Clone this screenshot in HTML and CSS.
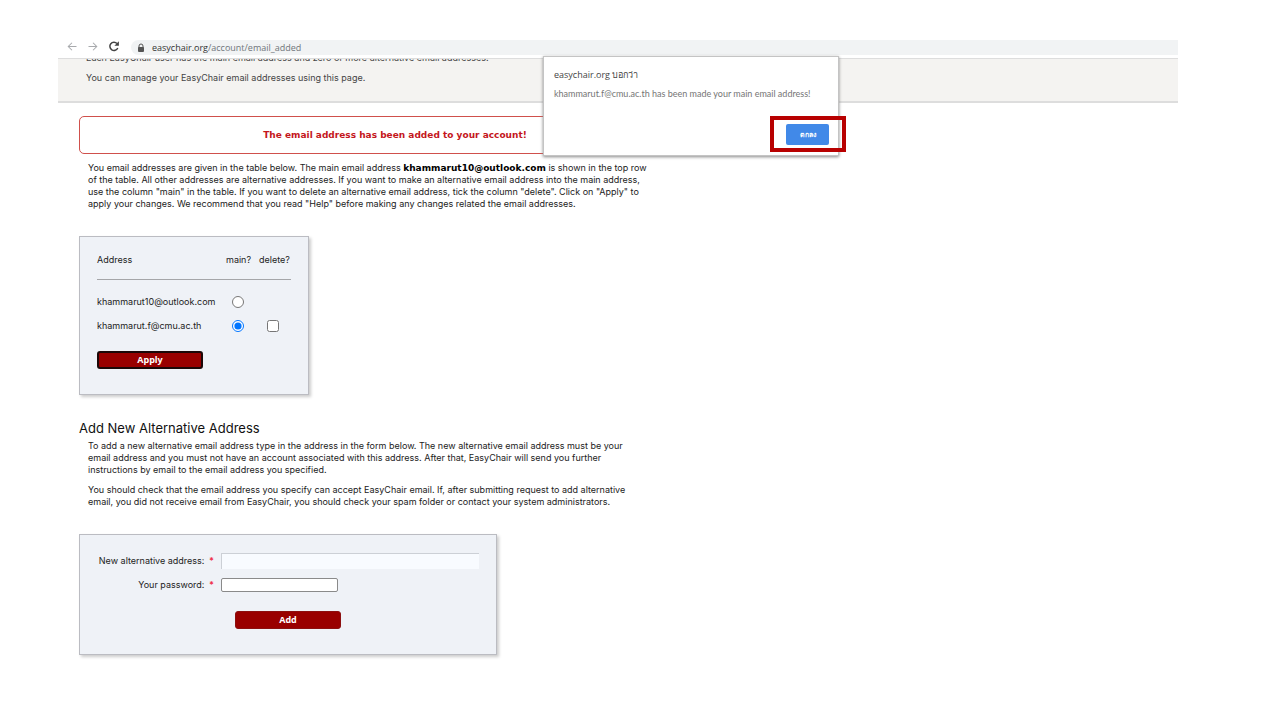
FILE: index.html
```html
<!DOCTYPE html>
<html lang="en">
<head>
    <meta charset="UTF-8">
    <title>EasyChair email addresses</title>
    <link rel="stylesheet" href="styles.css">
</head>
<body>

<div class="browser">
    <div class="toolbar">
        <div class="nav">
            <svg class="icon muted" viewBox="0 0 16 16"><path d="M14 8H3M8 3L3 8l5 5"/></svg>
            <svg class="icon muted" viewBox="0 0 16 16"><path d="M2 8h11M8 3l5 5-5 5"/></svg>
            <svg class="icon reload" viewBox="0 0 16 16"><path d="M13 10A5.5 5.5 0 1 1 12 4"/><path class="fill" d="M14.5 1v6h-6z"/></svg>
        </div>
        <div class="omnibox">
            <svg class="lock" viewBox="0 0 8 10"><path d="M2 5V3a2 2 0 0 1 4 0v2"/><rect x="1" y="4" width="6" height="5" rx="1"/></svg>
            <span>easychair.org<span class="path">/account/email_added</span></span>
        </div>
    </div>

    <header class="intro">
        <p>Each EasyChair user has the main email address and zero or more alternative email addresses.</p>
        <p>You can manage your EasyChair email addresses using this page.</p>
    </header>

    <main>
        <div class="notice">The email address has been added to your account!</div>

        <p class="text">You email addresses are given in the table below. The main email address <b>khammarut10@outlook.com</b> is shown in the top row<br>
        of the table. All other addresses are alternative addresses. If you want to make an alternative email address into the main address,<br>
        use the column "main" in the table. If you want to delete an alternative email address, tick the column "delete". Click on "Apply" to<br>
        apply your changes. We recommend that you read "Help" before making any changes related the email addresses.</p>

        <form class="panel addresses">
            <table>
                <thead>
                    <tr><th class="address">Address</th><th class="main">main?</th><th>delete?</th></tr>
                </thead>
                <tbody>
                    <tr>
                        <td>khammarut10@outlook.com</td>
                        <td><input type="radio" name="main" aria-label="Make khammarut10@outlook.com main"></td>
                        <td></td>
                    </tr>
                    <tr>
                        <td>khammarut.f@cmu.ac.th</td>
                        <td><input type="radio" name="main" checked aria-label="Make khammarut.f@cmu.ac.th main"></td>
                        <td><input type="checkbox" aria-label="Delete khammarut.f@cmu.ac.th"></td>
                    </tr>
                </tbody>
            </table>
            <button type="button" class="btn focused">Apply</button>
        </form>

        <h2>Add New Alternative Address</h2>
        <p class="text">To add a new alternative email address type in the address in the form below. The new alternative email address must be your<br>
        email address and you must not have an account associated with this address. After that, EasyChair will send you further<br>
        instructions by email to the email address you specified.</p>
        <p class="text">You should check that the email address you specify can accept EasyChair email. If, after submitting request to add alternative<br>
        email, you did not receive email from EasyChair, you should check your spam folder or contact your system administrators.</p>

        <form class="panel add-form">
            <label for="address">New alternative address: <span class="req">*</span></label>
            <input type="text" id="address">
            <label for="password">Your password: <span class="req">*</span></label>
            <input type="password" id="password">
            <button type="button" class="btn">Add</button>
        </form>
    </main>

    <div class="dialog" role="alertdialog" aria-labelledby="dialog-title">
        <div class="dialog-title" id="dialog-title">easychair.org บอกว่า</div>
        <p>khammarut.f@cmu.ac.th has been made your main email address!</p>
        <div class="highlight"><button type="button">ตกลง</button></div>
    </div>
</div>

</body>
</html>
```
FILE: styles.css
```css
* {
    box-sizing: border-box;
}
body {
    margin: 0;
    padding: 40px 102px 40px 58px;
    background: #fff;
    color: #222;
    font: 9px/12px Inter, Verdana, sans-serif;
}
p, h2 {
    margin: 0;
}
.browser {
    position: relative;
}

/* browser bar */
.toolbar {
    display: flex;
    height: 19px;
    padding-bottom: 3px;
    border-bottom: 1px solid #ddd;
    font: 9px/14px "Open Sans", "Noto Sans", sans-serif;
}
.nav {
    display: flex;
    gap: 9px;
    width: 73px;
    padding: 0 8px;
}
.icon {
    width: 12px;
    height: 13px;
    fill: none;
    stroke: #5f6368;
    stroke-width: 2;
}
.icon.muted {
    stroke: #a8aaad;
    stroke-width: 1.4;
}
.icon.reload {
    stroke: #444;
}
.icon .fill {
    fill: #444;
    stroke: none;
}
.omnibox {
    flex: 1;
    display: flex;
    align-items: center;
    gap: 7px;
    padding-left: 6px;
    border-radius: 8px 0 0 8px;
    background: #f1f3f4;
    color: #333;
}
.lock {
    width: 8px;
    height: 10px;
    fill: #555;
}
.lock path {
    fill: none;
    stroke: #555;
}
.path {
    color: #70757a;
}

/* page */
.intro {
    display: flex;
    flex-direction: column;
    justify-content: flex-end;
    gap: 8px;
    height: 44px;
    padding: 0 28px 17px;
    overflow: hidden;
    border-bottom: 2px solid #ddd;
    background: #f4f3f1;
    color: #444;
}
.intro p {
    flex-shrink: 0;
}
main {
    padding: 13px 21px 0;
}
.notice {
    max-width: 632px;
    margin-bottom: 8px;
    padding: 12px;
    border: 1px solid #d0504c;
    border-radius: 5px;
    color: #c4161c;
    font: bold 9px/12px "DejaVu Sans", Verdana, sans-serif;
    text-align: center;
}
.text {
    margin-bottom: 8px;
    padding-left: 9px;
}
.text b {
    color: #000;
    font-family: "DejaVu Sans", Verdana, sans-serif;
}
.panel {
    width: fit-content;
    margin: 26px 0 22px;
    padding: 17px;
    border: 1px solid #bbbcc2;
    background: #eff2f7;
    box-shadow: 2px 2px 3px #ccc;
}
h2 {
    color: #111;
    font-size: 13px;
    font-weight: normal;
    line-height: 23px;
}
table {
    width: 194px;
    border-collapse: collapse;
    table-layout: fixed;
}
th, td {
    padding: 0;
    font-weight: normal;
    text-align: left;
}
th {
    height: 25px;
    padding-bottom: 12px;
}
th.address {
    width: 129px;
}
th.main {
    width: 33px;
}
thead {
    border-bottom: 1px solid #a5a6a9;
}
td {
    height: 24px;
}
tbody::before {
    content: "";
    display: block;
    height: 10px;
}
td input {
    display: block;
    width: 12px;
    height: 12px;
    margin: 0 auto 0 6px;
}
td input[type="checkbox"] {
    margin-left: 8px;
}
.btn {
    width: 106px;
    height: 18px;
    padding: 0;
    border: 1px solid #8c1010;
    border-radius: 3px;
    background: #990000;
    color: #fff;
    font: bold 9px/14px "Open Sans", "Noto Sans", sans-serif;
}
.btn.focused {
    border: 2px solid #1c0808;
}
.addresses {
    padding-bottom: 25px;
}
.addresses .btn {
    display: block;
    margin-top: 13px;
}
.add-form {
    display: grid;
    grid-template-columns: 117px 258px;
    align-items: center;
    gap: 9px 7px;
    padding: 18px 17px 25px;
}
.add-form label {
    text-align: right;
    white-space: nowrap;
}
.req {
    margin-left: 2px;
    color: #f0304a;
    font-weight: bold;
}
.add-form input {
    width: 258px;
    height: 16px;
    border: 0;
    border-top: 1px solid #ccd0d6;
    border-left: 1px solid #ccd0d6;
    background: #f8fbff;
    font: inherit;
}
.add-form input[type="password"] {
    width: 117px;
    height: 14px;
    border: 1px solid #8a8a8a;
    border-radius: 2px;
    background: #fff;
}
.add-form .btn {
    grid-column: 2;
    margin: 10px 14px 0;
}

/* alert over the page */
.dialog {
    position: absolute;
    top: 16px;
    left: 485px;
    width: 296px;
    height: 100px;
    padding: 11px 10px;
    border: 1px solid #c4c4c4;
    background: #fff;
    box-shadow: 0 1px 3px #888;
    color: #757575;
    font: 9px/14px Lato, sans-serif;
}
.dialog-title {
    margin-bottom: 5px;
    color: #444;
    font: 9px/14px "Open Sans", "Noto Sans", sans-serif;
}
.highlight {
    position: absolute;
    top: 59px;
    right: -8px;
    padding: 4px 13px 3px 12px;
    border: 4px solid #b80000;
}
.highlight button {
    display: block;
    width: 43px;
    height: 21px;
    padding: 0;
    border: 0;
    border-radius: 2px;
    background: #4189e8;
    color: #fff;
    font: bold 7px/20px "Open Sans", "Noto Sans", sans-serif;
}
```
